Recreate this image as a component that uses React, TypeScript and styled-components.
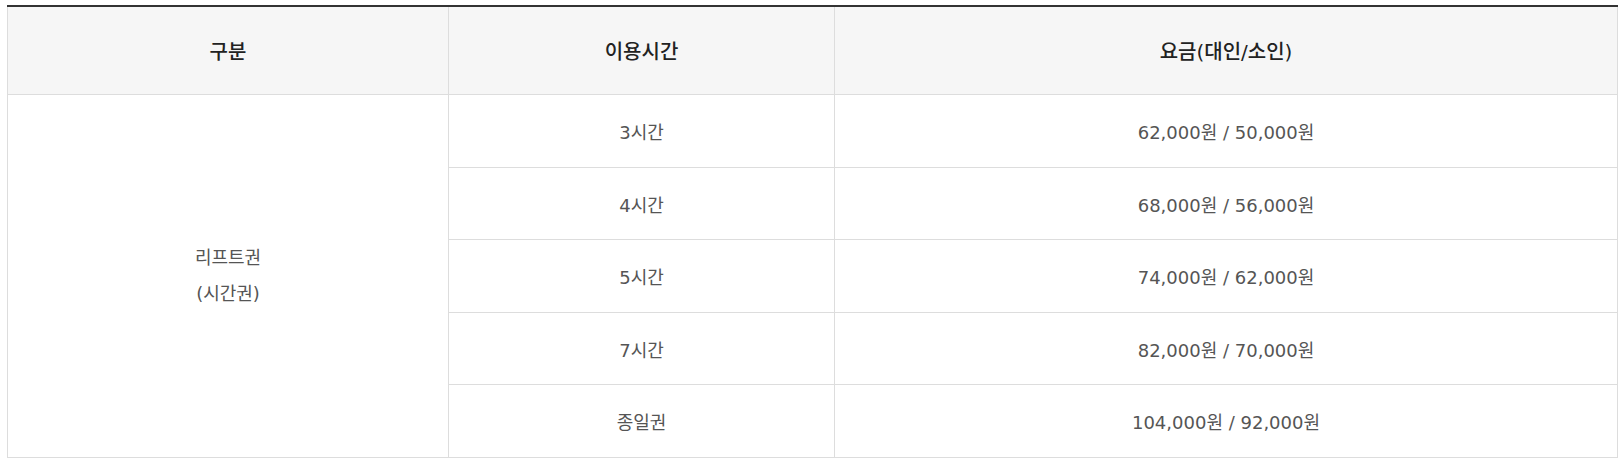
import React from "react";
import styled, { createGlobalStyle } from "styled-components";

const FONT = `"DejaVu Sans", "Noto Sans CJK KR", sans-serif`;

const GlobalStyle = createGlobalStyle`
  html, body {
    margin: 0;
    padding: 0;
    background: #fff;
  }
  body {
    font-family: ${FONT};
  }
`;

type Fare = { time: string; price: string };

const fares: Fare[] = [
  { time: "3시간", price: "62,000원 / 50,000원" },
  { time: "4시간", price: "68,000원 / 56,000원" },
  { time: "5시간", price: "74,000원 / 62,000원" },
  { time: "7시간", price: "82,000원 / 70,000원" },
  { time: "종일권", price: "104,000원 / 92,000원" },
];

// alternating 73/72 so the lines land where the reference draws them
const rowHeights = [73, 72, 73, 72, 73];

const App = () => {
  return (
    <>
      <GlobalStyle />
      <Page>
        <FareTable>
          <colgroup>
            <col style={{ width: 441 }} />
            <col style={{ width: 386 }} />
            <col style={{ width: 783 }} />
          </colgroup>
          <thead>
            <tr>
              <HeadCell>구분</HeadCell>
              <HeadCell>이용시간</HeadCell>
              <HeadCell>요금(대인/소인)</HeadCell>
            </tr>
          </thead>
          <tbody>
            {fares.map((fare, i) => (
              <BodyRow key={fare.time} $height={rowHeights[i]}>
                {i === 0 && (
                  <Cell rowSpan={fares.length}>
                    <Stacked>
                      리프트권
                      <br />
                      (시간권)
                    </Stacked>
                  </Cell>
                )}
                <Cell>{fare.time}</Cell>
                <Cell>{fare.price}</Cell>
              </BodyRow>
            ))}
          </tbody>
        </FareTable>
      </Page>
    </>
  );
};

export default App;

const Page = styled.div`
  padding: 5px 0 0 7px;
`;

const FareTable = styled.table`
  width: 1611px;
  border-collapse: collapse;
  table-layout: fixed;
  border-top: 2px solid #333;
  font-family: ${FONT};
`;

const HeadCell = styled.th`
  height: 87px;
  padding: 0;
  background: #f6f6f6;
  border: 1px solid #ddd;
  border-top: none;
  font-family: ${FONT};
  font-size: 20px;
  font-weight: 500;
  color: #222;
  text-align: center;
  vertical-align: middle;
`;

const BodyRow = styled.tr<{ $height: number }>`
  height: ${(p) => p.$height}px;
`;

const Cell = styled.td`
  padding: 0;
  border: 1px solid #ddd;
  font-family: ${FONT};
  font-size: 18px;
  color: #555;
  text-align: center;
  vertical-align: middle;
`;

const Stacked = styled.div`
  line-height: 36px;
`;
